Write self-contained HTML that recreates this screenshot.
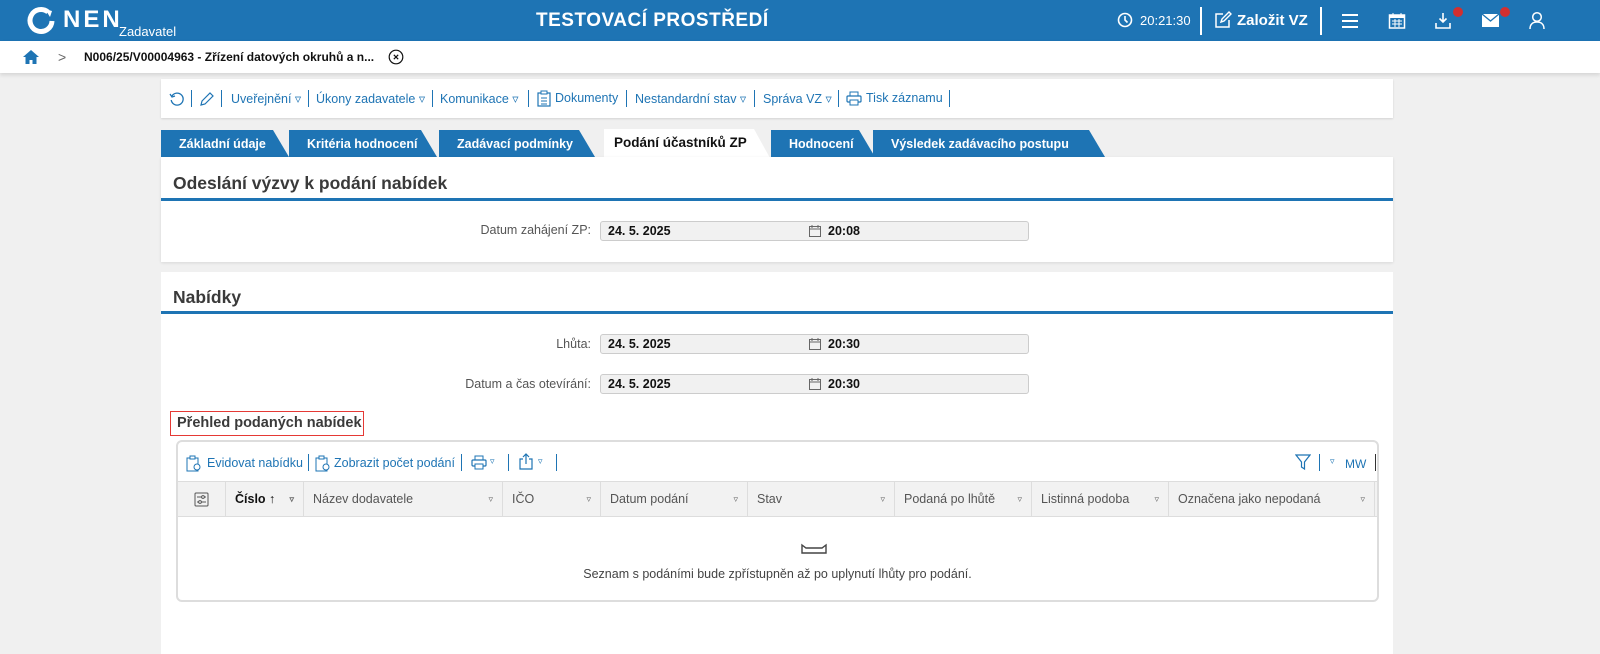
<!DOCTYPE html>
<html><head><meta charset="utf-8"><style>
*{box-sizing:border-box;margin:0;padding:0}
body{width:1600px;height:654px;overflow:hidden;background:#f0f0f0;font-family:"Liberation Sans",Arial,sans-serif;position:relative;color:#333}
.a{position:absolute}
.hdr{left:0;top:0;width:1600px;height:41px;background:#1e74b4;color:#fff}
.bc{left:0;top:41px;width:1600px;height:32px;background:#fff;box-shadow:0 2px 4px rgba(0,0,0,.12)}
.tb{left:161px;top:79px;width:1232px;height:39px;background:#fff;box-shadow:0 1px 2px rgba(0,0,0,.12);font-size:12.5px;color:#1e74b4}
.tb span{position:absolute;top:12px;white-space:nowrap}
.sep{position:absolute;width:1px;height:17px;background:#1e74b4}
.tab{position:absolute;top:130px;height:27px;background:#1e74b4;color:#fff;font-weight:bold;font-size:12.5px;line-height:29px;padding-left:18px}
.tab:after{content:"";position:absolute;right:-16px;top:0;border-left:16px solid #1e74b4;border-top:27px solid transparent}
.panel{background:#fff;left:161px;width:1232px}
.ptitle{position:absolute;left:12px;font-size:17.5px;font-weight:bold;color:#3a3a3a}
.pline{position:absolute;left:0;width:1232px;height:3px;background:#1e74b4}
.lbl{position:absolute;font-size:12.5px;color:#555;text-align:right;width:300px}
.inp{position:absolute;left:600px;width:429px;height:20px;background:#f1f1f1;border:1px solid #ccc;border-radius:3px;font-size:12.5px;font-weight:bold;color:#111;line-height:18px}
.cal{position:absolute;left:208px;top:3px}
.th{position:absolute;top:0;height:35px;border-right:1px solid #ddd;font-size:12.5px;color:#555;line-height:35px;padding-left:9px}
.th i{position:absolute;right:9px;font-style:normal;font-size:9px;color:#666}
</style></head><body>
<div class="a hdr">
  <svg class="a" style="left:26px;top:6px" width="30" height="30" viewBox="0 0 30 30"><path d="M22 6A11 11 0 1 0 26 15" fill="none" stroke="#fff" stroke-width="5"/><path d="M19 3l7 2-2 6" fill="#fff"/></svg>
  <div class="a" style="left:63px;top:6px;font-size:24px;font-weight:bold;letter-spacing:3px">NEN</div>
  <div class="a" style="left:119px;top:24px;font-size:13px">Zadavatel</div>
  <div class="a" style="left:536px;top:10px;font-size:19px;font-weight:bold;letter-spacing:.5px">TESTOVACÍ PROSTŘEDÍ</div>
  <svg class="a" style="left:1117px;top:12px" width="16" height="16" viewBox="0 0 16 16"><circle cx="8" cy="8" r="6.5" fill="none" stroke="#fff" stroke-width="1.6"/><path d="M8 4v4l2.5 2.5" stroke="#fff" stroke-width="1.6" fill="none"/></svg>
  <div class="a" style="left:1140px;top:13px;font-size:13px">20:21:30</div>
  <div class="a" style="left:1200px;top:7px;width:2px;height:28px;background:#fff"></div>
  <svg class="a" style="left:1214px;top:11px" width="18" height="18" viewBox="0 0 18 18"><path d="M9 3H2v13h13V9" fill="none" stroke="#fff" stroke-width="1.5"/><path d="M7 11l1-3 7-7 2 2-7 7z" fill="none" stroke="#fff" stroke-width="1.4"/></svg>
  <div class="a" style="left:1237px;top:12px;font-size:15px;font-weight:bold">Založit VZ</div>
  <div class="a" style="left:1320px;top:7px;width:2px;height:28px;background:#fff"></div>
  <div class="a" style="left:1342px;top:14px;width:16px;height:2px;background:#fff;box-shadow:0 6px 0 #fff,0 12px 0 #fff"></div>
  <svg class="a" style="left:1388px;top:12px" width="18" height="18" viewBox="0 0 18 18"><rect x="1.5" y="3" width="15" height="13" fill="none" stroke="#fff" stroke-width="1.5"/><rect x="1.5" y="3" width="15" height="3" fill="#fff"/><path d="M5 1v3M13 1v3M4 9h10M4 12h10M7 7v8M11 7v8" stroke="#fff" stroke-width="1"/></svg>
  <svg class="a" style="left:1434px;top:12px" width="18" height="18" viewBox="0 0 18 18"><path d="M9 1v9M5.5 6.5L9 10l3.5-3.5M2 11v5h14v-5" fill="none" stroke="#fff" stroke-width="1.6"/></svg>
  <div class="a" style="left:1453px;top:7px;width:10px;height:10px;border-radius:50%;background:#d32f2f"></div>
  <svg class="a" style="left:1481px;top:13px" width="19" height="15" viewBox="0 0 19 15"><rect x="1" y="1" width="17" height="13" fill="#fff"/><path d="M1 1l8.5 7L18 1" stroke="#1e74b4" stroke-width="1.3" fill="none"/></svg>
  <div class="a" style="left:1500px;top:7px;width:10px;height:10px;border-radius:50%;background:#d32f2f"></div>
  <svg class="a" style="left:1528px;top:11px" width="18" height="19" viewBox="0 0 18 19"><circle cx="9" cy="6" r="4.3" fill="none" stroke="#fff" stroke-width="1.5"/><path d="M2 18c0-5 3-7 7-7s7 2 7 7" fill="none" stroke="#fff" stroke-width="1.5"/></svg>
</div>
<div class="a bc">
  <svg class="a" style="left:22px;top:8px" width="18" height="16" viewBox="0 0 18 16"><path d="M9 1L1 8h2.5v7h4v-4h3v4h4V8H17z" fill="#1e74b4"/></svg>
  <div class="a" style="left:58px;top:8px;font-size:14px;color:#666">&gt;</div>
  <div class="a" style="left:84px;top:9px;font-size:12px;font-weight:bold;color:#111">N006/25/V00004963 - Zřízení datových okruhů a n...</div>
  <svg class="a" style="left:388px;top:8px" width="16" height="16" viewBox="0 0 16 16"><circle cx="8" cy="8" r="6.8" fill="none" stroke="#111" stroke-width="1.2"/><path d="M5.8 5.8l4.4 4.4M10.2 5.8l-4.4 4.4" stroke="#111" stroke-width="1.2"/></svg>
</div>
<div class="a tb">
  <svg class="a" style="left:8px;top:12px" width="16" height="16" viewBox="0 0 16 16"><path d="M3 5A6 6 0 1 1 2.2 9" fill="none" stroke="#1e74b4" stroke-width="1.3"/><path d="M1 3l2 3 3-1" fill="none" stroke="#1e74b4" stroke-width="1.3"/></svg>
  <div class="sep" style="left:30px;top:11px"></div>
  <svg class="a" style="left:38px;top:12px" width="16" height="16" viewBox="0 0 16 16"><path d="M2 14l1-4 8-8 3 3-8 8z" fill="none" stroke="#1e74b4" stroke-width="1.2"/></svg>
  <div class="sep" style="left:60px;top:11px"></div>
  <span style="left:70px">Uveřejnění ▿</span>
  <div class="sep" style="left:147px;top:11px"></div>
  <span style="left:155px">Úkony zadavatele ▿</span>
  <div class="sep" style="left:271px;top:11px"></div>
  <span style="left:279px">Komunikace ▿</span>
  <div class="sep" style="left:367px;top:11px"></div>
  <svg class="a" style="left:376px;top:11px" width="14" height="17" viewBox="0 0 14 17"><rect x="1" y="3" width="12" height="13" fill="none" stroke="#1e74b4" stroke-width="1.2"/><rect x="4" y="1" width="6" height="3" fill="#fff" stroke="#1e74b4"/><path d="M4 8h6M4 11h6M4 14h6" stroke="#1e74b4"/></svg>
  <span style="left:394px">Dokumenty</span>
  <div class="sep" style="left:465px;top:11px"></div>
  <span style="left:474px">Nestandardní stav ▿</span>
  <div class="sep" style="left:593px;top:11px"></div>
  <span style="left:602px">Správa VZ ▿</span>
  <div class="sep" style="left:677px;top:11px"></div>
  <svg class="a" style="left:685px;top:12px" width="16" height="15" viewBox="0 0 16 15"><rect x="4" y="1" width="8" height="4" fill="none" stroke="#1e74b4"/><rect x="1" y="5" width="14" height="6" rx="1" fill="none" stroke="#1e74b4" stroke-width="1.2"/><rect x="4" y="9" width="8" height="5" fill="#fff" stroke="#1e74b4"/></svg>
  <span style="left:705px">Tisk záznamu</span>
  <div class="sep" style="left:788px;top:11px"></div>
</div>
<div class="tab" style="left:161px;width:112px">Základní údaje</div>
<div class="tab" style="left:289px;width:132px">Kritéria hodnocení</div>
<div class="tab" style="left:439px;width:140px">Zadávací podmínky</div>
<div class="a" style="left:604px;top:129px;width:150px;height:29px;background:#fff;font-weight:bold;font-size:13.5px;line-height:27px;padding-left:10px;color:#111;white-space:nowrap">Podání účastníků ZP</div>
<div class="a" style="left:754px;top:129px;width:0;border-left:16px solid #fff;border-top:29px solid transparent"></div>
<div class="tab" style="left:771px;width:88px">Hodnocení</div>
<div class="tab" style="left:873px;width:216px">Výsledek zadávacího postupu</div>

<div class="a panel" style="top:157px;height:105px;box-shadow:0 1px 3px rgba(0,0,0,.1)">
  <div class="ptitle" style="top:16px">Odeslání výzvy k podání nabídek</div>
  <div class="pline" style="top:41px"></div>
  <div class="lbl" style="left:130px;top:66px">Datum zahájení ZP:</div>
  <div class="inp" style="left:439px;top:64px"><span class="a" style="left:7px">24. 5. 2025</span><svg class="cal" width="12" height="12" viewBox="0 0 12 12"><rect x=".5" y="1.5" width="11" height="10" fill="none" stroke="#666"/><path d="M.5 4h11M3 0v3M9 0v3" stroke="#666"/></svg><span class="a" style="left:227px">20:08</span></div>
</div>
<div class="a panel" style="top:272px;height:382px">
  <div class="ptitle" style="top:15px">Nabídky</div>
  <div class="pline" style="top:39px"></div>
  <div class="lbl" style="left:130px;top:65px">Lhůta:</div>
  <div class="inp" style="left:439px;top:62px"><span class="a" style="left:7px">24. 5. 2025</span><svg class="cal" width="12" height="12" viewBox="0 0 12 12"><rect x=".5" y="1.5" width="11" height="10" fill="none" stroke="#666"/><path d="M.5 4h11M3 0v3M9 0v3" stroke="#666"/></svg><span class="a" style="left:227px">20:30</span></div>
  <div class="lbl" style="left:130px;top:105px">Datum a čas otevírání:</div>
  <div class="inp" style="left:439px;top:102px"><span class="a" style="left:7px">24. 5. 2025</span><svg class="cal" width="12" height="12" viewBox="0 0 12 12"><rect x=".5" y="1.5" width="11" height="10" fill="none" stroke="#666"/><path d="M.5 4h11M3 0v3M9 0v3" stroke="#666"/></svg><span class="a" style="left:227px">20:30</span></div>
  <div class="a" style="left:9px;top:139px;width:194px;height:25px;border:1px solid #e53935;font-size:14.5px;font-weight:bold;color:#3a3a3a;padding:3px 0 0 6px">Přehled podaných nabídek</div>
  <div class="a" style="left:15px;top:168px;width:1203px;height:162px;border:2px solid #ddd;border-radius:6px;background:#fff">
    <svg class="a" style="left:8px;top:13px" width="16" height="17" viewBox="0 0 16 17"><rect x="1" y="3" width="11" height="13" fill="none" stroke="#1e74b4"/><rect x="4" y="1" width="5" height="3" fill="#fff" stroke="#1e74b4"/><circle cx="11" cy="12" r="3" fill="#fff" stroke="#1e74b4"/></svg>
    <div class="a" style="left:29px;top:14px;font-size:12.5px;color:#1e74b4">Evidovat nabídku</div>
    <div class="sep" style="left:130px;top:12px"></div>
    <svg class="a" style="left:137px;top:13px" width="16" height="17" viewBox="0 0 16 17"><rect x="1" y="3" width="11" height="13" fill="none" stroke="#1e74b4"/><rect x="4" y="1" width="5" height="3" fill="#fff" stroke="#1e74b4"/><circle cx="11" cy="12" r="3" fill="#fff" stroke="#1e74b4"/></svg>
    <div class="a" style="left:156px;top:14px;font-size:12.5px;color:#1e74b4">Zobrazit počet podání</div>
    <div class="sep" style="left:283px;top:12px"></div>
    <svg class="a" style="left:293px;top:13px" width="16" height="15" viewBox="0 0 16 15"><rect x="4" y="1" width="8" height="4" fill="none" stroke="#1e74b4"/><rect x="1" y="5" width="14" height="6" rx="1" fill="none" stroke="#1e74b4" stroke-width="1.2"/><rect x="4" y="9" width="8" height="5" fill="#fff" stroke="#1e74b4"/></svg>
    <div class="a" style="left:312px;top:14px;font-size:9px;color:#1e74b4">▿</div>
    <div class="sep" style="left:330px;top:12px"></div>
    <svg class="a" style="left:341px;top:11px" width="14" height="17" viewBox="0 0 14 17"><path d="M4 6H1v10h12V6h-3M7 11V1M4 4l3-3 3 3" fill="none" stroke="#1e74b4" stroke-width="1.2"/></svg>
    <div class="a" style="left:360px;top:14px;font-size:9px;color:#1e74b4">▿</div>
    <div class="sep" style="left:378px;top:12px"></div>
    <svg class="a" style="left:1117px;top:12px" width="16" height="17" viewBox="0 0 16 17"><path d="M1 1h14L9.5 8v7l-3-2V8z" fill="none" stroke="#1e74b4" stroke-width="1.2"/></svg>
    <div class="sep" style="left:1141px;top:12px"></div>
    <div class="a" style="left:1152px;top:14px;font-size:9px;color:#1e74b4">▿</div>
    <div class="a" style="left:1167px;top:15px;font-size:12px;color:#1e74b4">MW</div>
    <div class="sep" style="left:1197px;top:12px;background:#333"></div>
    <div class="a" style="left:0;top:39px;width:1199px;height:36px;background:#f2f2f2;border-top:1px solid #ddd;border-bottom:1px solid #ddd">
      <div class="th" style="left:0;width:48px"><svg style="position:absolute;left:16px;top:10px" width="15" height="15" viewBox="0 0 15 15"><rect x="1" y="1" width="13" height="13" rx="1" fill="none" stroke="#555"/><path d="M3 5h9M3 10h9" stroke="#555"/><circle cx="9" cy="5" r="1.4" fill="#fff" stroke="#555"/><circle cx="6" cy="10" r="1.4" fill="#fff" stroke="#555"/></svg></div>
      <div class="th" style="left:48px;width:78px;color:#111;font-weight:bold">Číslo <span style="font-weight:normal">↑</span><i>▿</i></div>
      <div class="th" style="left:126px;width:199px">Název dodavatele<i>▿</i></div>
      <div class="th" style="left:325px;width:98px">IČO<i>▿</i></div>
      <div class="th" style="left:423px;width:147px">Datum podání<i>▿</i></div>
      <div class="th" style="left:570px;width:147px">Stav<i>▿</i></div>
      <div class="th" style="left:717px;width:137px">Podaná po lhůtě<i>▿</i></div>
      <div class="th" style="left:854px;width:137px">Listinná podoba<i>▿</i></div>
      <div class="th" style="left:991px;width:206px">Označena jako nepodaná<i>▿</i></div>
    </div>
    <svg class="a" style="left:623px;top:101px" width="26" height="11" viewBox="0 0 26 11"><path d="M1 2l4 3h16l4-3v8H1z" fill="none" stroke="#444" stroke-width="1.4"/></svg>
    <div class="a" style="left:0;width:1199px;top:125px;text-align:center;font-size:12.5px;color:#444">Seznam s podáními bude zpřístupněn až po uplynutí lhůty pro podání.</div>
  </div>
</div>
</body></html>
